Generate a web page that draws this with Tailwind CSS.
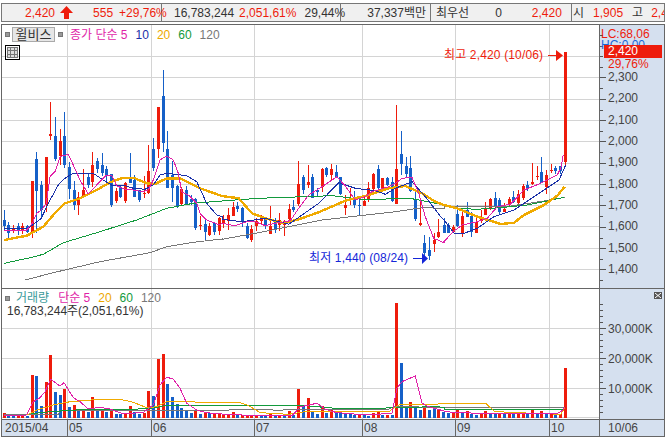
<!doctype html>
<html lang="ko">
<head>
<meta charset="UTF-8" />
<title>윌비스 차트</title>
<script src="https://cdn.jsdelivr.net/npm/@tailwindcss/browser@4"></script>
</head>
<body class="relative w-[666px] h-[438px] overflow-hidden bg-white text-[12px] leading-[14px] text-[#333] font-[family-name:'Liberation_Sans','Noto_Sans_CJK_KR',sans-serif]">

<!-- quote bar -->
<div class="mt-[3px] ml-px w-[664px] h-[19px] flex items-center border border-[#777] bg-[#f0f0f0] whitespace-nowrap overflow-visible">
  <div class="w-[160px] shrink-0 h-full flex items-center border-r border-[#777] text-[#ee1c0c]">
    <span class="ml-[23px]">2,420</span>
    <svg class="ml-[5px] shrink-0" width="13" height="13" viewBox="0 0 13 13"><path d="M6.5 0 13 7H9v6H4V7H0z" fill="#ee1c0c"/></svg>
    <span class="ml-[20px]">555</span>
    <span class="ml-[6px]">+29,76%</span>
  </div>
  <div class="w-[179px] shrink-0 h-full flex items-center border-r border-[#777]">
    <span class="ml-[12px]">16,783,244</span>
    <span class="ml-[5px] text-[#ee1c0c]">2,051,61%</span>
    <span class="ml-[8px]">29,44%</span>
  </div>
  <div class="w-[90px] shrink-0 h-full flex items-center justify-end pr-[4px] border-r border-[#777]">37,337백만</div>
  <div class="w-[141px] shrink-0 h-full flex items-center border-r border-[#777]">
    <span class="ml-[5px]">최우선</span>
    <span class="ml-[26px]">0</span>
    <span class="ml-[30px] text-[#ee1c0c]">2,420</span>
  </div>
  <div class="w-[92px] shrink-0 h-full flex items-center overflow-hidden">
    <span class="ml-[1px]">시</span>
    <span class="ml-[9px] text-[#ee1c0c]">1,905</span>
    <span class="ml-[9px]">고</span>
    <span class="ml-[8px] text-[#ee1c0c]">2,420</span>
  </div>
</div>

<!-- chart frame -->
<div class="mt-[2px] ml-px w-[664px] grid grid-cols-[598px_64px] grid-rows-[264px_131px_16px] border border-[#666]">

  <!-- price pane -->
  <div class="relative border-r border-b border-[#666]">
    <svg id="price" class="block" width="597" height="263" viewBox="2 25 597 263"></svg>
    <div class="absolute left-[3px] top-[2px] flex items-center">
      <span class="w-[5px] h-[5px] bg-[#999] border border-[#777]"></span>
      <span class="ml-[2px] w-[43px] h-[15px] flex items-center justify-center bg-[#e6e6e6] border border-[#aaa] text-[13px]">윌비스</span>
      <span class="ml-[3px] w-[5px] h-[5px] bg-[#999] border border-[#777]"></span>
      <span class="ml-[7px] text-[#df1fa8]">종가 단순 5</span>
      <span class="ml-[8px] text-[#1a30a8]">10</span>
      <span class="ml-[8px] text-[#eda800]">20</span>
      <span class="ml-[8px] text-[#129a3c]">60</span>
      <span class="ml-[8px] text-[#777]">120</span>
    </div>
    <div class="absolute left-[3px] top-[20px] w-[15px] h-[15px] border border-black p-px">
      <div class="w-full h-full grid grid-cols-3 grid-rows-3 gap-px bg-[#777] border border-[#777]">
        <i class="bg-[#ddd]"></i><i class="bg-[#ddd]"></i><i class="bg-[#ddd]"></i>
        <i class="bg-[#ddd]"></i><i class="bg-[#ddd]"></i><i class="bg-[#ddd]"></i>
        <i class="bg-[#ddd]"></i><i class="bg-[#ddd]"></i><i class="bg-[#ddd]"></i>
      </div>
    </div>
    <div class="absolute left-[442px] top-[23px] flex items-center text-[#ee1c0c] tracking-[0.15px]">
      <span>최고 2,420 (10/06)</span>
      <svg class="ml-[5px] shrink-0" width="15" height="11" viewBox="0 0 15 11"><path d="M0 5h8v1H0z M8 0l7 5.5L8 11z" fill="#ee1c0c"/></svg>
    </div>
    <div class="absolute left-[307px] top-[226px] flex items-center text-[#1426d8] tracking-[0.15px]">
      <span>최저 1,440 (08/24)</span>
      <svg class="ml-[5px] shrink-0" width="15" height="11" viewBox="0 0 15 11"><path d="M0 5h9v1H0z M9 0l6 5.5L9 11z" fill="#1426d8"/></svg>
    </div>
  </div>

  <!-- price scale -->
  <div class="relative bg-[#d5e0ef] border-b border-[#666] overflow-hidden">
    <svg id="priceTicks" class="absolute left-0 top-0" width="64" height="263" viewBox="600 25 64 263"></svg>
    <div class="absolute left-[1px] top-[2px] text-[#ee1c0c]">LC:68,06</div>
    <div class="absolute left-[1px] top-[13px] text-[#1a66d8]">HC:0,00</div>
    <div class="absolute left-[4px] top-[20px] w-[58px] h-[13px] bg-[#ee1c0c] pl-[4px] text-white leading-[13px]">2,420</div>
    <div class="absolute left-[8px] top-[32px] text-[#ee1c0c]">29,76%</div>
    <div class="absolute left-[8px] top-[42px] flex flex-col text-[#444]">
      <span class="h-[21.33px] leading-[21.33px]">2,300</span>
      <span class="h-[21.33px] leading-[21.33px]">2,200</span>
      <span class="h-[21.33px] leading-[21.33px]">2,100</span>
      <span class="h-[21.33px] leading-[21.33px]">2,000</span>
      <span class="h-[21.33px] leading-[21.33px]">1,900</span>
      <span class="h-[21.33px] leading-[21.33px]">1,800</span>
      <span class="h-[21.33px] leading-[21.33px]">1,700</span>
      <span class="h-[21.33px] leading-[21.33px]">1,600</span>
      <span class="h-[21.33px] leading-[21.33px]">1,500</span>
      <span class="h-[21.33px] leading-[21.33px]">1,400</span>
    </div>
  </div>

  <!-- volume pane -->
  <div class="relative border-r border-b border-[#666]">
    <svg id="volume" class="block" width="597" height="130" viewBox="2 289 597 130"></svg>
    <div class="absolute left-[3px] top-[2px] flex items-center">
      <span class="w-[5px] h-[5px] bg-[#999] border border-[#777]"></span>
      <span class="ml-[6px] text-[#3a9a9a]">거래량</span>
      <span class="ml-[9px] text-[#df1fa8]">단순 5</span>
      <span class="ml-[8px] text-[#eda800]">20</span>
      <span class="ml-[8px] text-[#129a3c]">60</span>
      <span class="ml-[8px] text-[#777]">120</span>
    </div>
    <div class="absolute left-[5px] top-[15px]">16,783,244주(2,051,61%)</div>
  </div>

  <!-- volume scale -->
  <div class="relative bg-[#d5e0ef] border-b border-[#666] overflow-hidden">
    <svg id="volumeTicks" class="absolute left-0 top-0" width="64" height="130" viewBox="600 289 64 130"></svg>
    <div class="absolute right-[2px] top-[3px] w-[8px] h-[7px] bg-[#555] flex items-center justify-center">
      <svg width="6" height="5" viewBox="0 0 6 5"><path d="M0 0l6 5M6 0L0 5" stroke="#fff" fill="none"/></svg>
    </div>
    <div class="absolute left-[8px] top-[33px] text-[#444]">30,000K</div>
    <div class="absolute left-[8px] top-[63px] text-[#444]">20,000K</div>
    <div class="absolute left-[8px] top-[93px] text-[#444]">10,000K</div>
  </div>

  <!-- date axis -->
  <div class="flex bg-[#d5e0ef] text-[#444] leading-[16px] border-r border-[#666]">
    <span class="w-[66px] pl-[3px] border-r border-[#666]">2015/04</span>
    <span class="w-[84px] pl-[1px] border-r border-[#666]">05</span>
    <span class="w-[103px] pl-[1px] border-r border-[#666]">06</span>
    <span class="w-[108px] pl-[1px] border-r border-[#666]">07</span>
    <span class="w-[93px] pl-[1px] border-r border-[#666]">08</span>
    <span class="w-[94px] pl-[1px] border-r border-[#666]">09</span>
    <span class="flex-1 pl-[1px]">10</span>
  </div>
  <div class="bg-[#d5e0ef] text-[#444] leading-[16px] pl-[8px]">10/06</div>
</div>

<script>
  const RED = "#ee1c0c", BLUE = "#1560c8";
  const MAG = "#e020a8", NAVY = "#1a30a8", ORG = "#f0aa00", GRN = "#129a3c", GRY = "#777";
  const GRIDX = [67, 151, 254, 362, 455, 549];

  // [x, colour, high, low, bodyTop, bodyBottom] read off 3x crops, [xOff, yOff] per crop
  const candles = [
    [0, 60, [[13,"b",450,510,480,498],[25,"b",485,533,496,520],[40,"r",495,518,505,514],[55,"b",490,525,497,510],[67,"r",490,522,497,510],[82,"b",495,518,497,515],[97,"r",363,533,363,515],[109,"b",277,520,297,392],[124,"b",363,475,375,450],[139,"r",291,455,291,432],[151,"r",126,240,222,227],[166,"b",172,305,228,297],[181,"r",207,315,243,288],[193,"b",156,325,228,315],[208,"b",305,417,321,387],[223,"b",362,450,390,435],[235,"r",397,467,411,435],[250,"r",327,415,390,411],[265,"b",340,385,350,375],[277,"r",276,380,315,365],[292,"b",295,340,303,326],[307,"b",280,350,315,340],[319,"b",318,375,327,345],[334,"b",343,443,343,435],[349,"r",385,430,393,423],[361,"b",378,415,381,411],[376,"r",367,430,369,423],[391,"b",280,370,354,368],[403,"b",345,412,360,411],[418,"b",390,425,390,420],[433,"r",348,413,400,403],[445,"r",255,402,333,399],[460,"b",235,333,267,323],[475,"r",141,295,141,267],[490,"b",30,275,108,249],[502,"b",214,385,267,383],[517,"b",303,425,345,383],[532,"b",375,443,378,438],[544,"r",380,435,388,432],[559,"b",378,433,390,432],[574,"b",405,435,417,427],[586,"b",415,510,417,503],[601,"r",467,510,495,498],[616,"b",475,545,492,515],[628,"r",490,528,497,523],[643,"b",485,525,489,515],[658,"r",470,525,474,512]]],
    [222, 60, [[4,"r",465,505,477,493],[18,"r",445,510,465,482],[33,"r",427,470,441,467],[46,"b",425,455,437,445],[61,"b",440,500,443,485],[76,"b",488,535,497,533],[88,"r",495,545,507,540],[103,"r",475,513,484,500],[118,"r",465,495,474,483],[130,"b",470,505,478,495],[145,"r",437,522,497,521],[160,"b",475,520,485,510],[172,"r",460,515,480,495],[187,"r",480,527,487,495],[202,"r",432,490,447,478],[214,"b",420,455,441,449],[229,"r",303,437,372,432],[244,"b",345,402,350,390],[259,"r",315,385,366,375],[271,"b",342,415,350,413],[286,"b",385,413,390,395],[301,"r",323,395,327,380],[313,"b",322,352,325,345],[328,"r",313,362,327,345],[343,"b",315,355,336,350],[355,"b",350,405,352,404],[370,"r",405,465,435,443],[385,"r",385,435,415,422],[397,"b",393,443,418,435],[412,"b",410,465,435,438],[427,"r",405,438,423,438],[439,"r",365,425,385,422],[454,"r",340,390,342,387],[469,"b",315,390,327,385],[481,"r",355,390,354,388],[496,"b",350,378,353,373],[511,"b",350,425,366,423],[523,"r",135,432,327,432],[538,"b",213,345,283,312],[553,"b",290,350,317,342],[565,"b",288,395,324,392],[580,"b",397,485,416,476],[595,"r",423,497,490,497],[607,"b",525,600,550,580],[622,"b",530,600,570,588],[637,"r",520,578,540,552],[649,"r",477,535,517,533]]],
    [444, 100, [[0,"b",355,400,375,398],[13,"b",370,398,375,398],[27,"r",375,397,380,395],[40,"b",315,380,343,380],[55,"r",332,410,348,400],[70,"b",307,350,330,350],[83,"b",335,410,348,395],[97,"r",355,400,366,398],[112,"r",330,368,355,365],[124,"r",307,345,323,345],[139,"r",295,332,297,324],[154,"b",277,320,295,318],[167,"b",293,340,300,337],[181,"r",310,337,327,335],[196,"r",290,320,297,315],[208,"b",273,310,292,306],[223,"r",270,320,282,308],[239,"r",253,300,258,293],[250,"b",243,272,255,264],[265,"r",190,255,247,252],[281,"r",198,240,228,230],[292,"b",172,250,216,248],[307,"r",210,282,225,262],[322,"r",192,220,210,214],[334,"b",197,220,204,214],[349,"b",198,222,199,214],[364,"r",-144,195,-144,185]]]
  ];

  // moving averages: colour, width, then crop segments [xOff, yOff, x,y,x,y...]
  const priceLines = [
    [GRY, 1, [[0,60,75,660,160,638,300,605,450,578,500,560,580,547,666,537],[222,60,0,538,100,520,300,480,520,455,600,443,666,445],[444,100,0,320,100,320,200,318,300,303,362,292]]],
    [GRN, 1, [[0,60,13,610,90,593,130,583,190,548,300,515,410,480,500,445,580,430,666,423],[222,60,0,423,110,415,330,407,420,418,570,416,666,435],[444,100,35,325,100,328,180,322,250,315,310,303,360,292]]],
    [ORG, 2.4, [[0,60,13,540,80,527,130,500,160,465,195,430,240,415,290,390,330,367,370,353,400,353,440,370,465,372,500,355,540,355,600,385,666,408],[222,60,0,408,50,415,90,460,130,475,185,490,230,478,290,457,370,422,440,405,500,385,550,378,600,400,640,425,666,435],[444,100,0,315,40,325,100,350,170,372,210,368,240,345,300,315,340,287,362,260]]],
    [NAVY, 1, [[0,60,13,507,85,505,124,475,145,430,175,375,195,355,215,342,255,340,280,340,310,360,340,378,370,375,400,385,435,388,460,375,480,345,500,340,560,347,590,365,620,430,650,465,666,470],[222,60,0,478,60,485,130,475,200,493,240,465,290,430,350,368,400,385,460,392,490,403,520,385,570,365,610,410,660,475],[444,100,0,360,30,400,60,400,100,385,150,350,210,330,300,270,345,240,365,195]]],
    [MAG, 1, [[0,60,13,512,40,510,80,510,97,490,110,460,124,450,139,430,150,350,165,335,180,290,205,283,222,320,240,360,265,402,290,375,320,345,335,345,350,378,375,387,400,390,430,395,445,390,460,360,480,300,500,288,520,300,535,340,545,395,565,405,590,430,600,460,620,480,660,495],[222,60,0,490,40,497,80,483,100,485,130,497,160,490,205,482,230,445,260,405,300,380,345,350,370,378,400,420,430,410,450,395,500,380,520,370,540,355,570,352,590,400,610,470,635,535,666,548],[444,100,0,425,27,395,55,375,100,365,130,355,160,320,200,312,240,270,290,250,340,225,350,205,358,165]]]
  ];

  const volumes = [
    [0, [[13,"r",385],[25,"b",388],[40,"b",392],[55,"r",388],[67,"r",390],[82,"b",392],[97,"r",270],[109,"b",273],[124,"b",363],[139,"r",291],[151,"r",210],[166,"b",321],[181,"b",330],[193,"r",312],[208,"b",366],[223,"r",360],[235,"b",375],[250,"r",372],[265,"b",382],[277,"r",336],[292,"b",378],[307,"r",373],[319,"b",382],[334,"r",373],[349,"b",387],[361,"b",387],[376,"r",383],[391,"r",363],[403,"b",382],[418,"b",387],[433,"r",383],[445,"r",318],[460,"b",333],[475,"r",222],[490,"r",207],[502,"b",297],[517,"b",336],[532,"b",357],[544,"b",369],[559,"b",378],[574,"b",384],[586,"r",375],[601,"b",387],[616,"r",381],[628,"b",385],[643,"r",386],[658,"r",384]]],
    [222, [[4,"r",388],[18,"r",388],[33,"r",381],[46,"b",390],[61,"r",389],[76,"r",389],[88,"r",389],[103,"r",391],[118,"b",392],[130,"b",392],[145,"r",388],[160,"b",391],[172,"r",389],[187,"b",389],[202,"r",378],[214,"b",389],[229,"r",312],[244,"b",363],[259,"r",339],[271,"b",381],[286,"b",387],[301,"r",363],[313,"b",384],[328,"r",375],[343,"b",384],[355,"b",384],[370,"b",387],[385,"b",387],[397,"b",390],[412,"r",389],[427,"b",389],[439,"b",392],[454,"r",384],[469,"r",381],[481,"b",389],[496,"r",389],[511,"b",389],[523,"r",54],[538,"b",234],[553,"b",368],[565,"r",351],[580,"b",368],[595,"b",375],[607,"r",368],[622,"b",375],[637,"b",372],[649,"r",372],[664,"b",380]]],
    [444, [[13,"b",384],[27,"r",383],[40,"r",375],[55,"b",381],[70,"r",378],[83,"b",387],[97,"b",390],[112,"r",385],[124,"r",378],[139,"b",385],[154,"b",388],[167,"r",385],[181,"b",388],[196,"r",387],[208,"b",388],[223,"r",387],[239,"r",387],[250,"b",388],[265,"r",375],[281,"b",387],[292,"r",378],[307,"b",387],[322,"r",385],[334,"b",390],[349,"r",388],[364,"r",249]]]
  ];

  const volumeLines = [
    [GRY, 1, [[0,285,13,388,175,388,180,377,430,377,666,377],[222,285,0,377,40,373,150,373,155,377,210,373,500,373,515,365,666,367],[444,285,0,367,360,367]]],
    [GRN, 1, [[0,285,80,388,150,380,260,373,400,373,470,368,500,360,666,360],[222,285,0,361,235,361,320,368,350,371,445,371,515,368,640,365,666,367],[444,285,0,372,360,372]]],
    [ORG, 1, [[0,285,13,392,80,390,110,375,160,360,210,350,300,343,360,343,400,352,440,368,470,365,500,350,666,352],[222,285,0,352,50,352,80,362,115,383,200,388,250,380,500,380,530,360,640,358,666,355],[444,285,0,355,125,355,150,378,190,382,350,388,362,370]]],
    [MAG, 1, [[0,285,13,392,80,390,100,350,120,338,135,320,152,283,180,303,192,293,220,338,240,350,265,372,300,367,330,372,370,387,430,382,460,360,480,300,500,277,520,282,540,310,560,355,590,375,620,383,666,387],[222,285,0,387,100,392,210,392,235,365,285,355,310,372,340,382,370,385,430,390,510,385,525,310,540,290,580,273,600,355,620,365,666,378],[444,285,0,380,100,385,200,385,340,385,358,375,362,365]]]
  ];

  const put = (svg, tag, attrs) => {
    const el = document.createElementNS("http://www.w3.org/2000/svg", tag);
    for (const k in attrs) el.setAttribute(k, attrs[k]);
    svg.appendChild(el);
  };
  const rect = (svg, x, y, w, h, fill) => put(svg, "rect", { x, y, width: w, height: h, fill, "shape-rendering": "crispEdges" });
  const col = (c) => (c === "r" ? RED : BLUE);

  const drawLines = (svg, lines) => {
    for (const [stroke, width, segs] of lines) {
      const pts = [];
      for (const [ox, oy, ...v] of segs)
        for (let i = 0; i < v.length; i += 2) pts.push((v[i] / 3 + ox).toFixed(1) + "," + (v[i + 1] / 3 + oy).toFixed(1));
      put(svg, "polyline", { points: pts.join(" "), fill: "none", stroke, "stroke-width": width, "shape-rendering": "crispEdges" });
    }
  };

  // price pane
  const price = document.getElementById("price");
  [56, 77, 99, 120, 141, 163, 184, 205, 226, 248, 269].forEach((y) => rect(price, 2, y, 598, 1, "#d4d4d4"));
  GRIDX.forEach((x) => rect(price, x, 25, 1, 263, "#d4d4d4"));
  for (const [ox, oy, list] of candles) {
    for (const [zx, c, hi, lo, top, bot] of list) {
      const x = Math.floor(zx / 3 + ox);
      rect(price, x, Math.round(hi / 3 + oy), 1, Math.max(1, Math.round((lo - hi) / 3)), col(c));
      rect(price, x - 1, Math.round(top / 3 + oy), 3, Math.max(1, Math.round((bot - top) / 3)), col(c));
    }
  }
  drawLines(price, priceLines);

  // volume pane
  const volume = document.getElementById("volume");
  [328, 358, 388, 417].forEach((y) => rect(volume, 2, y, 598, 1, "#d4d4d4"));
  GRIDX.forEach((x) => rect(volume, x, 289, 1, 130, "#d4d4d4"));
  for (const [ox, list] of volumes) {
    for (const [zx, c, top] of list) {
      const y = Math.round(top / 3 + 285);
      rect(volume, Math.floor(zx / 3 + ox) - 1, y, 3, 418 - y, col(c));
    }
  }
  drawLines(volume, volumeLines);

  // scale ticks
  const priceTicks = document.getElementById("priceTicks");
  for (let i = 0; i < 12; i++) {
    const y = Math.round(34.6 + i * 21.33);
    rect(priceTicks, 600, y, i < 2 ? 3 : 6, 1, "#555");
    rect(priceTicks, 600, Math.round(y + 10.7), 3, 1, "#555");
  }
  const volumeTicks = document.getElementById("volumeTicks");
  for (let y = 304; y < 418; y += 6) {
    const major = y === 328 || y === 358 || y === 388;
    rect(volumeTicks, 600, y, major ? 6 : 3, 1, "#555");
  }
</script>
</body>
</html>
